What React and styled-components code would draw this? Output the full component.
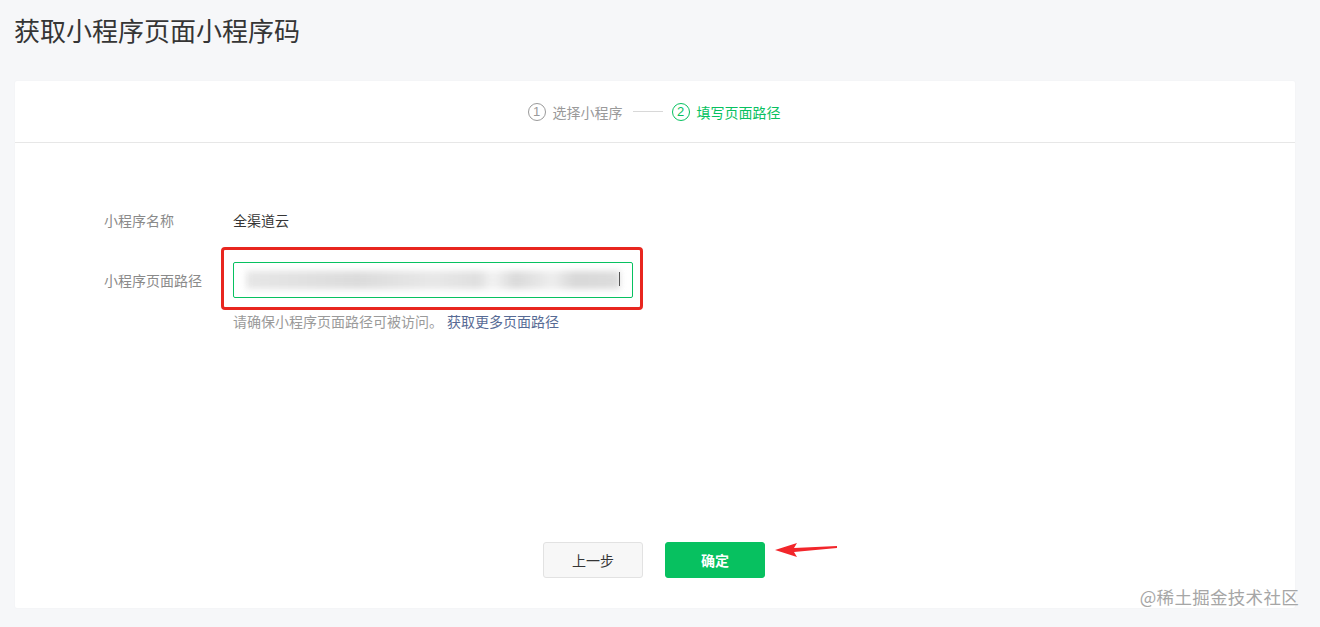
import React from 'react';
import styled, { createGlobalStyle } from 'styled-components';

const GlobalStyle = createGlobalStyle`
  html, body {
    margin: 0;
    padding: 0;
    background: #f6f7f9;
    font-family: "Noto Sans CJK SC", "Liberation Sans", sans-serif;
  }
`;

const steps = [
  { num: 1, text: '选择小程序', active: false },
  { num: 2, text: '填写页面路径', active: true },
];

const App = () => {
  return (
    <Page>
      <GlobalStyle />
      <Title>获取小程序页面小程序码</Title>
      <Card>
        <StepBar>
          {steps.map((step, idx) => (
            <React.Fragment key={step.num}>
              {idx > 0 && <StepLine />}
              <Step $active={step.active}>
                <StepNum $active={step.active}>{step.num}</StepNum>
                {step.text}
              </Step>
            </React.Fragment>
          ))}
        </StepBar>
        <Body>
          <Form>
            <Row>
              <Label>小程序名称</Label>
              <Value>全渠道云</Value>
            </Row>
            <Row $gap={32}>
              <Label $offset={8}>小程序页面路径</Label>
              <Field>
                <InputWrap>
                  <Input>
                    <Blur />
                    <Caret />
                  </Input>
                  <Highlight />
                </InputWrap>
                <Hint>
                  请确保小程序页面路径可被访问。
                  <HintLink>获取更多页面路径</HintLink>
                </Hint>
              </Field>
            </Row>
          </Form>
          <Footer>
            <Button>上一步</Button>
            <ButtonWrap>
              <Button $primary>确定</Button>
              <Arrow width="64" height="16" viewBox="0 0 64 16">
                <path d="M0 8 L22 1 L19 6 L62 4 L62 6 L19 10 L22 15 Z" fill="#f2262b" />
              </Arrow>
            </ButtonWrap>
          </Footer>
          <Watermark>@稀土掘金技术社区</Watermark>
        </Body>
      </Card>
    </Page>
  );
};

export default App;

const Page = styled.div`
  width: 1320px;
  height: 627px;
  padding: 12px 25px 0 15px;
  box-sizing: border-box;
  overflow: hidden;
`;

const Title = styled.h1`
  margin: 0 0 0 -1px;
  font-size: 26px;
  line-height: 36px;
  font-weight: 400;
  color: #353535;
`;

const Card = styled.div`
  margin-top: 33px;
  width: 1280px;
  height: 527px;
  background: #fff;
  border-radius: 2px;
  box-shadow: 0 0 2px rgba(0, 0, 0, 0.04);
  display: flex;
  flex-direction: column;
`;

const StepBar = styled.div`
  height: 61px;
  border-bottom: 1px solid #e7e7e7;
  display: flex;
  align-items: center;
  justify-content: center;
  padding-right: 2px;
`;

const Step = styled.div`
  display: flex;
  align-items: center;
  gap: 7px;
  font-size: 14px;
  color: ${({ $active }) => ($active ? '#07c160' : '#9a9a9a')};
`;

const StepNum = styled.span`
  width: 16px;
  height: 16px;
  border: 1px solid ${({ $active }) => ($active ? '#07c160' : '#9a9a9a')};
  border-radius: 50%;
  display: flex;
  align-items: center;
  justify-content: center;
  font-size: 13px;
  line-height: 1;
  font-family: "Liberation Sans", sans-serif;
`;

const StepLine = styled.span`
  width: 30px;
  height: 1px;
  background: #d8d8d8;
  margin: 0 9px 0 10px;
`;

const Body = styled.div`
  flex: 1;
  position: relative;
  display: flex;
  flex-direction: column;
`;

const Form = styled.div`
  padding: 67px 0 0 89px;
`;

const Row = styled.div`
  display: flex;
  align-items: flex-start;
  margin-top: ${({ $gap }) => ($gap ? `${$gap}px` : '0')};
`;

const Label = styled.div`
  width: 129px;
  font-size: 14px;
  line-height: 20px;
  color: #8a8a8a;
  padding-top: ${({ $offset }) => ($offset ? `${$offset}px` : '0')};
`;

const Value = styled.div`
  font-size: 14px;
  line-height: 20px;
  color: #353535;
`;

const Field = styled.div`
  display: flex;
  flex-direction: column;
`;

const InputWrap = styled.div`
  position: relative;
  width: 400px;
`;

const Input = styled.div`
  height: 36px;
  border: 1px solid #07c160;
  border-radius: 2px;
  box-sizing: border-box;
  position: relative;
  overflow: hidden;
`;

const Blur = styled.div`
  position: absolute;
  left: 12px;
  right: 12px;
  top: 8px;
  height: 18px;
  background: linear-gradient(
    90deg,
    #e4e4e4 0%,
    #d8d8d8 30%,
    #e6e6e6 50%,
    #dcdcdc 62%,
    #f2f2f2 66%,
    #d6d6d6 72%,
    #ececec 82%,
    #d4d4d4 88%,
    #d9d9d9 100%
  );
  filter: blur(3px);
  opacity: 0.9;
`;

const Caret = styled.span`
  position: absolute;
  right: 12px;
  top: 9px;
  width: 1px;
  height: 14px;
  background: #555;
`;

const Highlight = styled.span`
  position: absolute;
  left: -12px;
  right: -10px;
  top: -15px;
  bottom: -12px;
  border: 3px solid #e8261f;
  border-radius: 4px;
  pointer-events: none;
`;

const Hint = styled.div`
  margin-top: 13px;
  font-size: 14px;
  line-height: 20px;
  color: #9a9a9a;
`;

const HintLink = styled.a`
  margin-left: 4px;
  color: #576b95;
  text-decoration: none;
`;

const Footer = styled.div`
  margin-top: auto;
  padding-bottom: 30px;
  display: flex;
  justify-content: center;
  gap: 22px;
  padding-right: 2px;
`;

const ButtonWrap = styled.div`
  position: relative;
`;

const Button = styled.button`
  width: 100px;
  height: 36px;
  border-radius: 3px;
  border: 1px solid ${({ $primary }) => ($primary ? '#07c160' : '#e2e2e2')};
  background: ${({ $primary }) => ($primary ? '#07c160' : '#f7f7f7')};
  color: ${({ $primary }) => ($primary ? '#fff' : '#353535')};
  font-size: 14px;
  font-family: inherit;
  font-weight: ${({ $primary }) => ($primary ? 600 : 400)};
  cursor: pointer;
`;

const Arrow = styled.svg`
  position: absolute;
  left: 110px;
  top: 0;
`;

const Watermark = styled.div`
  position: absolute;
  right: -4px;
  bottom: -1px;
  font-size: 17.5px;
  line-height: 24px;
  color: #a6a6a6;
  letter-spacing: 0.3px;
`;
